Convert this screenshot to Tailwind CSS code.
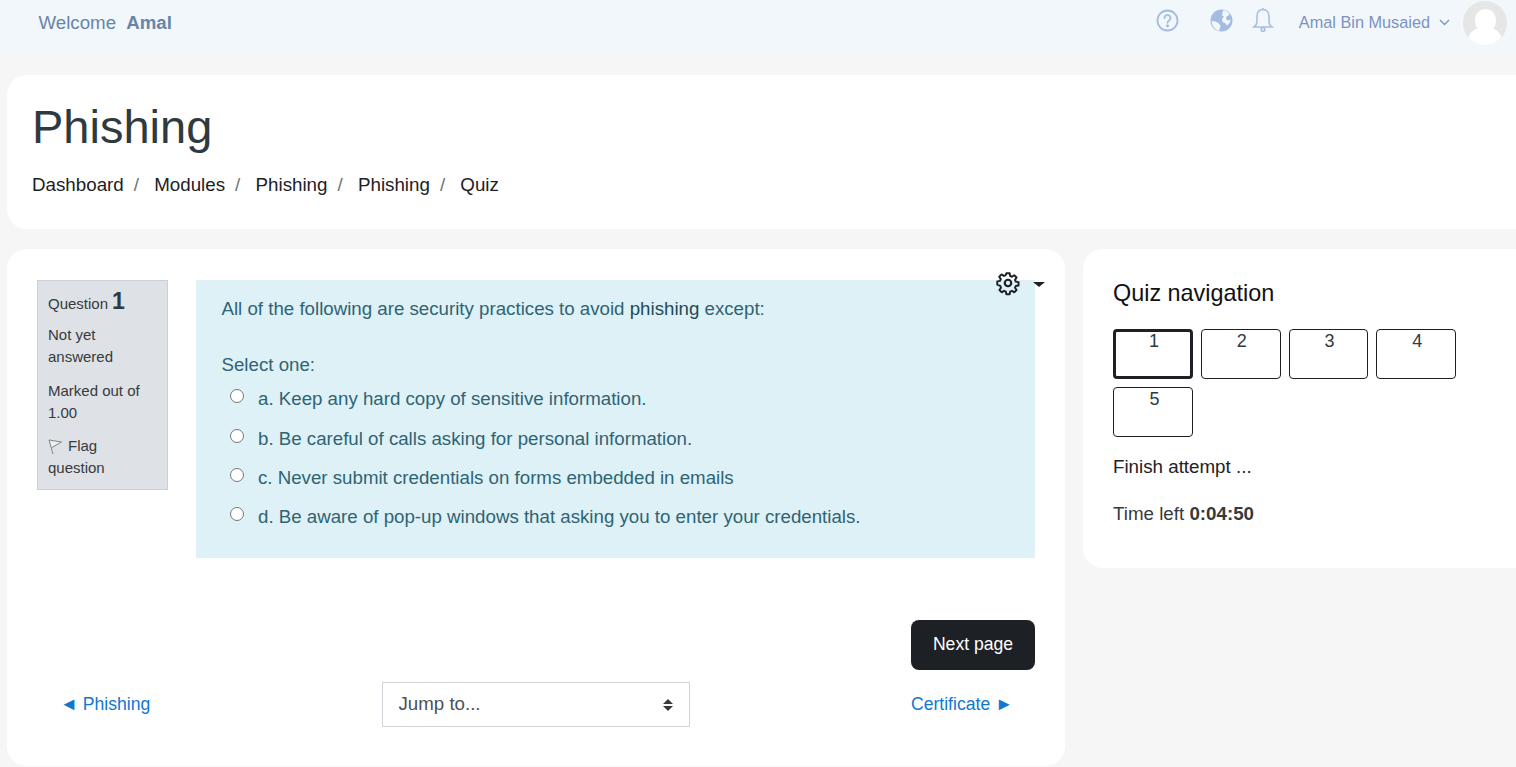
<!DOCTYPE html>
<html lang="en">
<head>
    <meta charset="UTF-8">
    <title>Phishing Quiz</title>
    <script src="https://cdn.jsdelivr.net/npm/@tailwindcss/browser@4"></script>
</head>
<body class="bg-[#f6f6f6] font-['Liberation_Sans',Arial,sans-serif] overflow-hidden h-[767px]">
    <header class="h-[55px] bg-[#f1f7fa] flex items-start pl-[38.5px] pr-[9px]">
        <div class="mt-[12px] text-[18.7px] leading-[22px] text-[#6a84a8]">Welcome <span class="font-bold ml-[5px]">Amal</span></div>
        <div class="ml-auto flex items-start">
            <svg class="mt-[9px]" width="23" height="23" viewBox="0 0 23 23" fill="none" stroke="#a5bbdf" stroke-width="1.8"><circle cx="11.5" cy="11.5" r="10"/><path d="M8.5 9a3 3 0 1 1 4.6 2.5c-1 .6-1.6 1.2-1.6 2.3" stroke-linecap="round"/><circle cx="11.5" cy="16.8" r=".6" fill="#a5bbdf"/></svg>
            <svg class="mt-[9px] ml-[31px]" width="23" height="23" viewBox="0 0 23 23"><circle cx="11.5" cy="11.5" r="11" fill="#a5bbdf"/><path d="M13 1.500l2-.2 3.500 2.200 1 2.500-2.500 1-1 2.500 1.500 2 3-1-.5 3-3 3-2-2.500-2.500-1-.5-3 2-2.500-2-1zM1.500 12l4 .5 3.500 2 1.500 2.500-1 3.500-.5 1.500C5 20.500 2 17 1.500 12z" fill="#f1f7fa"/></svg>
            <svg class="mt-[7px] ml-[19px]" width="22" height="26" viewBox="0 0 22 26" fill="none" stroke="#aabfe0" stroke-width="1.6"><path d="M11 2.500c-4 0-6 3-6 7v5c0 3-1.500 4.500-3 5.500h18c-1.500-1-3-2.500-3-5.500v-5c0-4-2-7-6-7z"/><path d="M11 1v2"/><circle cx="11" cy="22.500" r="1.800"/></svg>
            <span class="mt-[13px] ml-[25px] text-[16.3px] leading-[19px] text-[#7b93c2]">Amal Bin Musaied</span>
            <svg class="mt-[19px] ml-[9px]" width="11" height="7" viewBox="0 0 11 7" fill="none" stroke="#7b93c2" stroke-width="1.300"><path d="M1 1l4.500 4.500L10 1"/></svg>
            <div class="relative mt-[1px] ml-[13px] w-[44px] h-[44px] rounded-full bg-[#e6e6e6] overflow-hidden">
                <div class="absolute left-[12px] top-[8px] w-[21px] h-[23px] rounded-full bg-white"></div>
                <div class="absolute left-[5px] top-[27px] w-[34px] h-[26px] rounded-full bg-white"></div>
            </div>
        </div>
    </header>

    <section class="mt-[20px] ml-[7px] h-[154px] bg-white rounded-l-[20px] pl-[25px] pt-[24px]">
        <h1 class="text-[47px] leading-[56px] text-[#2f3a40]">Phishing</h1>
        <nav class="mt-[18px] flex text-[18.75px] leading-[24px] text-[#1d2125]">
            <span>Dashboard</span><span class="text-[#6a737b] ml-[10px] mr-[15.25px]">/</span>
            <span>Modules</span><span class="text-[#6a737b] ml-[10px] mr-[15.25px]">/</span>
            <span>Phishing</span><span class="text-[#6a737b] ml-[10px] mr-[15.25px]">/</span>
            <span>Phishing</span><span class="text-[#6a737b] ml-[10px] mr-[15.25px]">/</span>
            <span>Quiz</span>
        </nav>
    </section>

    <div class="mt-[20px] ml-[7px] flex items-start gap-[18px]">
        <main class="relative w-[1058px] h-[517px] bg-white rounded-[20px] pl-[30px] pr-[30px] pt-[31px]">
            <div class="flex items-start gap-[28px]">
                <aside class="w-[131px] h-[210px] shrink-0 bg-[#dee2e6] border border-[#cad0d7] pl-[10px] pr-[14px] pt-[6px] text-[15px] leading-[22px] text-[#373a3c]">
                    <div class="flex items-baseline leading-[28px]">Question <span class="ml-[4px] text-[23px] font-bold text-[#2f3a40]">1</span></div>
                    <div class="mt-[6px]">Not yet answered</div>
                    <div class="mt-[12px]">Marked out of 1.00</div>
                    <div class="mt-[11px]"><svg class="inline-block mr-[5px] -mt-[1px]" width="15" height="16" viewBox="0 0 15 16" fill="none" stroke="#858585" stroke-width="1"><path d="M1 1l12.500 2L4 8.500" fill="#eceef0"/><path d="M1 1l4 14"/></svg>Flag question</div>
                </aside>
                <div class="w-[839px] h-[278px] bg-[#def1f7] pl-[25.5px] pt-[17px] text-[18.7px] leading-[24px] text-[#2f6473]">
                    <p>All of the following are security practices to avoid <span class="text-[#1f4a56]">phishing</span> except:</p>
                    <p class="mt-[32px]">Select one:</p>
                    <div class="mt-[10px] flex flex-col gap-[15px]">
                        <div class="flex items-start"><span class="mt-[2px] ml-[8.5px] mr-[14px] w-[14px] h-[14px] rounded-full bg-white border border-[#767676]"></span>a. Keep any hard copy of sensitive information.</div>
                        <div class="mt-[1px] flex items-start"><span class="mt-[2px] ml-[8.5px] mr-[14px] w-[14px] h-[14px] rounded-full bg-white border border-[#767676]"></span>b. Be careful of calls asking for personal information.</div>
                        <div class="flex items-start"><span class="mt-[2px] ml-[8.5px] mr-[14px] w-[14px] h-[14px] rounded-full bg-white border border-[#767676]"></span>c. Never submit credentials on forms embedded in emails</div>
                        <div class="flex items-start"><span class="mt-[2px] ml-[8.5px] mr-[14px] w-[14px] h-[14px] rounded-full bg-white border border-[#767676]"></span>d. Be aware of pop-up windows that asking you to enter your credentials.</div>
                    </div>
                </div>
            </div>
            <div class="absolute left-[988px] top-[21px] flex items-center">
                <svg width="26" height="26" viewBox="0 0 24 24" fill="none" stroke="#1d2125" stroke-width="2" stroke-linejoin="round"><circle cx="12" cy="12" r="3"/><path d="M10.300 2h3.400l.5 2.800 1.800.8 2.400-1.600 2.400 2.400-1.600 2.400.8 1.800 2.800.5v3.400l-2.800.5-.8 1.800 1.600 2.400-2.400 2.400-2.400-1.600-1.800.8-.5 2.800h-3.400l-.5-2.800-1.800-.8-2.400 1.600-2.400-2.400 1.600-2.400-.8-1.800L1 13.700v-3.400l2.800-.5.800-1.800L3 5.600 5.400 3.200l2.400 1.600 1.800-.8z" transform="translate(1.200 1.200) scale(.9)"/></svg>
                <span class="ml-[12px] mt-[3px] w-0 h-0 border-x-[6px] border-x-transparent border-t-[5px] border-t-[#1d2125]"></span>
            </div>
            <div class="absolute left-[904px] top-[371px] w-[124px] h-[50px] rounded-[8px] bg-[#1d2125] text-white text-[17.6px] pb-[2px] flex items-center justify-center">Next page</div>
            <div class="absolute left-[30px] right-[30px] top-[433px] h-[45px] flex items-center text-[18px] text-[#1177d1]">
                <span class="ml-[23px] w-[322px]">◄ <span class="text-[17.6px]">Phishing</span></span>
                <div class="relative w-[308px] h-[45px] border border-[#ced4da] text-[18.7px] text-[#495057] pl-[15.5px] leading-[41px]">Jump to...
                    <span class="absolute right-[16px] top-[16px] w-0 h-0 border-x-[5px] border-x-transparent border-b-[5px] border-b-[#343a40]"></span>
                    <span class="absolute right-[16px] top-[23px] w-0 h-0 border-x-[5px] border-x-transparent border-t-[5px] border-t-[#343a40]"></span>
                </div>
                <span class="ml-auto mr-[22px]"><span class="text-[17.6px]">Certificate</span> ►</span>
            </div>
        </main>

        <aside class="flex-1 h-[319px] bg-white rounded-l-[20px] pl-[30px] pt-[29px] text-[#1d2125]">
            <h2 class="text-[23.4px] leading-[30px] text-[#111]">Quiz navigation</h2>
            <div class="mt-[21px] w-[352px] flex flex-wrap gap-x-[8px] gap-y-[8px] text-[18px] leading-[22px] text-center text-[#2f3a40]">
                <div class="w-[79.8px] h-[50px] rounded-[4px] border-[3px] border-[#1d2125] pl-[2px] leading-[18px]">1</div>
                <div class="w-[79.8px] h-[50px] rounded-[4px] border border-[#1d2125] pl-[2px]">2</div>
                <div class="w-[79.8px] h-[50px] rounded-[4px] border border-[#1d2125] pl-[2px]">3</div>
                <div class="w-[79.8px] h-[50px] rounded-[4px] border border-[#1d2125] pl-[2px]">4</div>
                <div class="w-[79.8px] h-[50px] rounded-[4px] border border-[#1d2125] pl-[3px]">5</div>
            </div>
            <p class="mt-[18px] text-[18.75px] leading-[24px]">Finish attempt ...</p>
            <p class="mt-[23px] text-[18.75px] leading-[24px] text-[#373a3c]">Time left <span class="font-bold">0:04:50</span></p>
        </aside>
    </div>
</body>
</html>
